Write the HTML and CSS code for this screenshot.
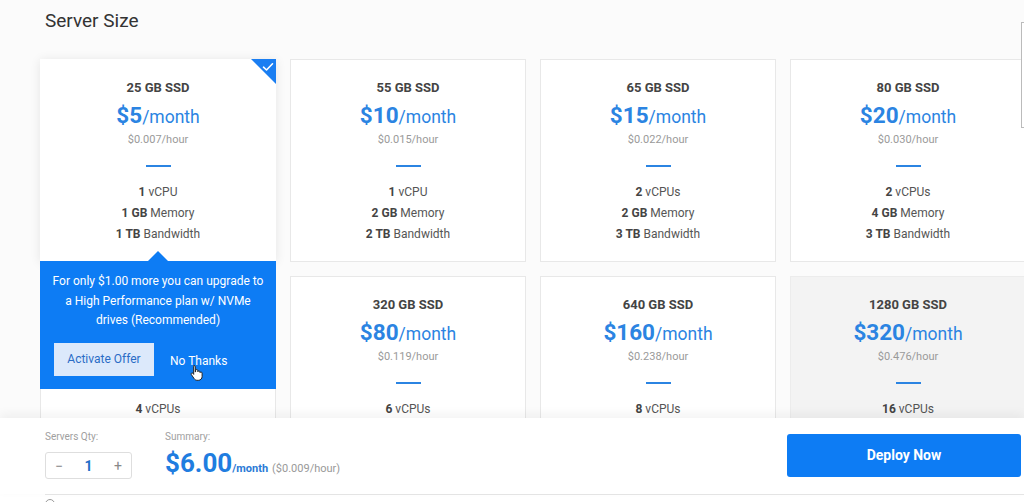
FILE: index.html
```html
<!DOCTYPE html>
<html>
<head>
<meta charset="utf-8">
<link rel="stylesheet" href="styles.css">
</head>
<body>
<div class="page">
  <div class="content">
    <h2 class="title">Server Size</h2>
    <div class="grid">
      <div class="card selected">
        <div class="corner"><svg width="12" height="10" viewBox="0 0 12 10"><path d="M1.5 5.2 L4.5 8 L10.5 1.8" fill="none" stroke="#fff" stroke-width="1.6" stroke-linecap="round" stroke-linejoin="round"/></svg></div>
        <div class="size">25 GB SSD</div>
        <div class="price"><b>$5</b>/month</div>
        <div class="hour">$0.007/hour</div>
        <div class="rule"></div>
        <div class="spec first"><b>1</b> vCPU</div>
        <div class="spec"><b>1 GB</b> Memory</div>
        <div class="spec last"><b>1 TB</b> Bandwidth</div>
        <div class="popover">
          <p class="offer">For only $1.00 more you can upgrade to<br>a High Performance plan w/ NVMe<br>drives (Recommended)</p>
          <div class="actions">
            <span class="btn-activate">Activate Offer</span>
            <span class="btn-no">No Thanks</span>
          </div>
          <svg class="cursor" width="14" height="17" viewBox="0 0 14 17"><path d="M4 1.5c.8 0 1.3.6 1.3 1.3V8l.3-.1V6.6c0-.7.5-1.1 1.1-1.1s1.1.4 1.1 1.1v1.1c.2-.5.6-.8 1.1-.8.6 0 1.1.5 1.1 1.1v.6c.2-.4.6-.6 1-.6.6 0 1.1.5 1.1 1.1v3.4c0 2-1.5 3.8-3.6 3.8H7.1c-1.2 0-2.2-.6-2.9-1.6L1.3 10.5c-.3-.5-.2-1.1.3-1.4.5-.3 1.1-.2 1.4.3l.7 1V2.8C3.7 2.1 3.2 1.5 4 1.5z" fill="#fff" stroke="#222" stroke-width="1"/></svg>
        </div>
      </div>
      <div class="card">
        <div class="size">55 GB SSD</div>
        <div class="price"><b>$10</b>/month</div>
        <div class="hour">$0.015/hour</div>
        <div class="rule"></div>
        <div class="spec first"><b>1</b> vCPU</div>
        <div class="spec"><b>2 GB</b> Memory</div>
        <div class="spec last"><b>2 TB</b> Bandwidth</div>
      </div>
      <div class="card">
        <div class="size">65 GB SSD</div>
        <div class="price"><b>$15</b>/month</div>
        <div class="hour">$0.022/hour</div>
        <div class="rule"></div>
        <div class="spec first"><b>2</b> vCPUs</div>
        <div class="spec"><b>2 GB</b> Memory</div>
        <div class="spec last"><b>3 TB</b> Bandwidth</div>
      </div>
      <div class="card">
        <div class="size">80 GB SSD</div>
        <div class="price"><b>$20</b>/month</div>
        <div class="hour">$0.030/hour</div>
        <div class="rule"></div>
        <div class="spec first"><b>2</b> vCPUs</div>
        <div class="spec"><b>4 GB</b> Memory</div>
        <div class="spec last"><b>3 TB</b> Bandwidth</div>
      </div>
      <div class="card">
        <div class="size">160 GB SSD</div>
        <div class="price"><b>$40</b>/month</div>
        <div class="hour">$0.060/hour</div>
        <div class="rule"></div>
        <div class="spec first"><b>4</b> vCPUs</div>
        <div class="spec"><b>8 GB</b> Memory</div>
        <div class="spec last"><b>4 TB</b> Bandwidth</div>
      </div>
      <div class="card">
        <div class="size">320 GB SSD</div>
        <div class="price"><b>$80</b>/month</div>
        <div class="hour">$0.119/hour</div>
        <div class="rule"></div>
        <div class="spec first"><b>6</b> vCPUs</div>
        <div class="spec"><b>16 GB</b> Memory</div>
        <div class="spec last"><b>5 TB</b> Bandwidth</div>
      </div>
      <div class="card">
        <div class="size">640 GB SSD</div>
        <div class="price"><b>$160</b>/month</div>
        <div class="hour">$0.238/hour</div>
        <div class="rule"></div>
        <div class="spec first"><b>8</b> vCPUs</div>
        <div class="spec"><b>32 GB</b> Memory</div>
        <div class="spec last"><b>6 TB</b> Bandwidth</div>
      </div>
      <div class="card hover">
        <div class="size">1280 GB SSD</div>
        <div class="price"><b>$320</b>/month</div>
        <div class="hour">$0.476/hour</div>
        <div class="rule"></div>
        <div class="spec first"><b>16</b> vCPUs</div>
        <div class="spec"><b>64 GB</b> Memory</div>
        <div class="spec last"><b>7 TB</b> Bandwidth</div>
      </div>
    </div>
    <div class="edge-panel"></div>
  </div>
  <div class="footer">
    <div class="qty-col">
      <div class="label">Servers Qty:</div>
      <div class="qty">
        <span class="op">&minus;</span>
        <span class="num">1</span>
        <span class="op">+</span>
      </div>
    </div>
    <div class="sum-col">
      <div class="label">Summary:</div>
      <div class="total"><b>$6.00</b><span class="per">/month</span> <span class="hr">($0.009/hour)</span></div>
    </div>
    <div class="deploy">Deploy Now</div>
  </div>
  <div class="below">
    <span class="dot"></span>
  </div>
</div>
</body>
</html>
```

FILE: styles.css
```css
* { box-sizing: border-box; }
html, body { margin: 0; padding: 0; }
body {
  font-family: Roboto, "Liberation Sans", Arial, sans-serif;
  color: #444;
  background: #fbfbfb;
  width: 1024px;
  height: 502px;
  overflow: hidden;
}
.page {
  display: flex;
  flex-direction: column;
  height: 502px;
}
.content {
  position: relative;
  height: 418px;
  overflow: hidden;
  padding-left: 40px;
  flex: none;
}
.title {
  margin: 0;
  padding: 9px 0 0 5px;
  height: 59px;
  font-size: 19px;
  font-weight: 400;
  line-height: 24px;
  color: #333;
}
.grid {
  display: grid;
  grid-template-columns: repeat(4, 236px);
  column-gap: 14px;
  row-gap: 14px;
  width: 1000px;
}
.card {
  position: relative;
  background: #fff;
  border: 1px solid #e8e8e8;
  text-align: center;
  padding: 20px 0 20px;
  height: 203px;
}
.card.selected {
  border-color: #fff;
  box-shadow: 0 1px 10px rgba(0,0,0,0.09);
  z-index: 2;
}
.card.hover { background: #f3f3f3; border-color: #ececec; }
.corner {
  position: absolute;
  top: -1px;
  right: -1px;
  width: 25px;
  height: 25px;
  background: #1a7ef2;
  clip-path: polygon(0 0, 100% 0, 100% 100%);
}
.corner svg { position: absolute; top: 3px; right: 2px; }
.size {
  font-size: 13px;
  font-weight: 700;
  line-height: 16px;
  color: #444;
}
.price {
  margin-top: 5px;
  font-size: 17.5px;
  line-height: 28px;
  color: #2b84e2;
}
.price b { font-size: 22.5px; font-weight: 700; }
.hour {
  margin-top: 2px;
  font-size: 11px;
  line-height: 14px;
  color: #9a9a9a;
}
.rule {
  width: 25px;
  height: 2px;
  background: #2b84e2;
  margin: 18px auto 0;
}
.spec {
  font-size: 12px;
  line-height: 16px;
  color: #555;
  margin-top: 5px;
}
.spec b { color: #444; }
.spec.first { margin-top: 17px; margin-bottom: 2px; }
.popover {
  position: absolute;
  left: -1px;
  right: -1px;
  top: 100%;
  height: 128px;
  background: #0d7cf4;
  color: #fff;
  padding: 11px 10px 0;
  z-index: 3;
}
.popover::before {
  content: "";
  position: absolute;
  top: -10px;
  left: 107px;
  width: 22px;
  height: 11px;
  background: #0d7cf4;
  clip-path: polygon(50% 0, 100% 100%, 0 100%);
}
.offer {
  margin: 0;
  font-size: 12px;
  line-height: 19.5px;
  text-align: center;
}
.actions {
  display: flex;
  align-items: center;
  margin-top: 12px;
  padding-left: 4px;
}
.btn-activate {
  display: block;
  width: 100px;
  height: 33px;
  line-height: 33px;
  background: #dce9fb;
  color: #2a6cc6;
  font-size: 12px;
  text-align: center;
}
.btn-no {
  margin-left: 16px;
  margin-top: 4px;
  font-size: 12px;
  color: #fff;
}
.cursor { position: absolute; left: 150px; top: 103px; }
.edge-panel {
  position: absolute;
  right: -6px;
  top: 22px;
  width: 9px;
  height: 106px;
  border: 1px solid #bbb;
  background: #fff;
}
.footer {
  position: relative;
  z-index: 5;
  height: 76px;
  background: #fff;
  box-shadow: 0 -4px 10px rgba(0,0,0,0.05);
  display: flex;
  align-items: flex-start;
  padding-left: 45px;
}
.label {
  font-size: 10px;
  color: #a0a0a0;
  line-height: 12px;
  margin-top: 13px;
}
.qty-col { width: 120px; }
.qty {
  margin-top: 9px;
  width: 87px;
  height: 27px;
  border: 1px solid #dedede;
  border-radius: 3px;
  display: flex;
  align-items: center;
  justify-content: space-between;
  padding: 0 9px 0 9px;
}
.op { font-size: 14px; color: #888; }
.num { font-size: 14px; font-weight: 700; color: #1f6fc8; }
.sum-col { width: 622px; }
.total {
  margin-top: 3px;
  color: #2b84e2;
  line-height: 34px;
}
.total b { font-size: 26px; font-weight: 700; color: #1f7de0; }
.per { font-size: 11px; font-weight: 700; color: #2b7ad6; }
.hr { font-size: 11px; color: #999; }
.deploy {
  margin-top: 16px;
  width: 234px;
  height: 43px;
  line-height: 43px;
  background: #0d7cf4;
  color: #fff;
  border-radius: 3px;
  text-align: center;
  font-size: 14px;
  font-weight: 700;
}
.below {
  flex: 1;
  background: #fff;
  position: relative;
}
.below::before {
  content: "";
  position: absolute;
  left: 45px;
  right: 0;
  top: 0;
  height: 1px;
  background: #e6e6e6;
}
.dot {
  position: absolute;
  left: 45px;
  top: 5px;
  width: 10px;
  height: 10px;
  border: 1px solid #999;
  border-radius: 50%;
}
```
